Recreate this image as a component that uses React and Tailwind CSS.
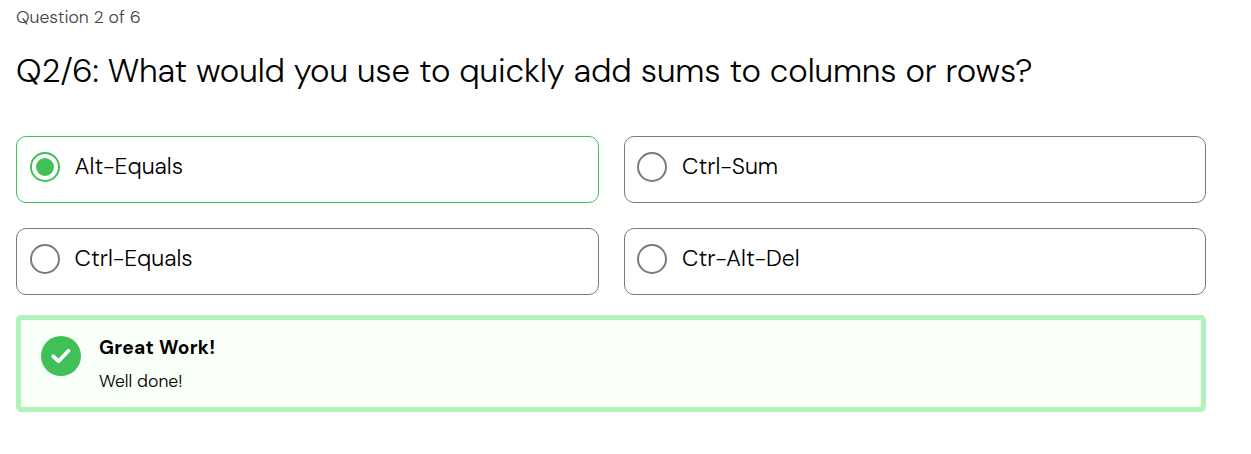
const options = [
  { label: 'Alt-Equals', selected: true },
  { label: 'Ctrl-Sum' },
  { label: 'Ctrl-Equals' },
  { label: 'Ctr-Alt-Del' },
];

function Option({ label, selected }) {
  return (
    <label className={`flex h-[67px] items-start rounded-[10px] border pl-[12.5px] pt-[15px] ${selected ? 'border-[#40c057]' : 'border-[#7a7a7a]'}`}>
      <span className={`flex size-[30px] shrink-0 items-center justify-center rounded-full border-2 ${selected ? 'border-[#40c057]' : 'border-[#7a7a7a]'}`}>
        {selected && <span className="size-[18px] rounded-full bg-[#40c057]" />}
      </span>
      <span className="ml-[15px] text-[23px] leading-[28px]">{label}</span>
    </label>
  );
}

export default function App() {
  return (
    <main className="h-[454px] bg-white pl-4 pr-[45px] font-['DM_Sans','Inter',sans-serif] font-light text-black">
      <p className="pt-[5px] text-[17.6px] leading-6 text-[#444]">Question 2 of 6</p>
      <h1 className="mt-[18px] whitespace-nowrap text-[33px] leading-[48px] tracking-[-0.115px]">Q2/6: What would you use to quickly add sums to columns or rows?</h1>
      <div className="mt-[41px] grid grid-cols-2 gap-x-[25px] gap-y-[25px]">
        {options.map((o) => <Option key={o.label} {...o} />)}
      </div>
      <section className="mt-5 flex h-[97px] rounded-[5px] border-5 border-[#b2f2bb] bg-[#f9fff9] pl-5 pt-4">
        <span className="flex size-10 items-center justify-center rounded-full bg-[#40c057]">
          <svg viewBox="0 0 40 40" className="size-10" fill="none" stroke="white" strokeWidth="3.8" strokeLinecap="round" strokeLinejoin="round"><path d="M12.3 20.3l5.2 4.9 10-10.4" /></svg>
        </span>
        <div className="ml-[18px]">
          <h2 className="text-[19.2px] font-bold leading-6 tracking-[0.3px]">Great Work!</h2>
          <p className="mt-[9px] text-[17.6px] leading-6">Well done!</p>
        </div>
      </section>
    </main>
  );
}
